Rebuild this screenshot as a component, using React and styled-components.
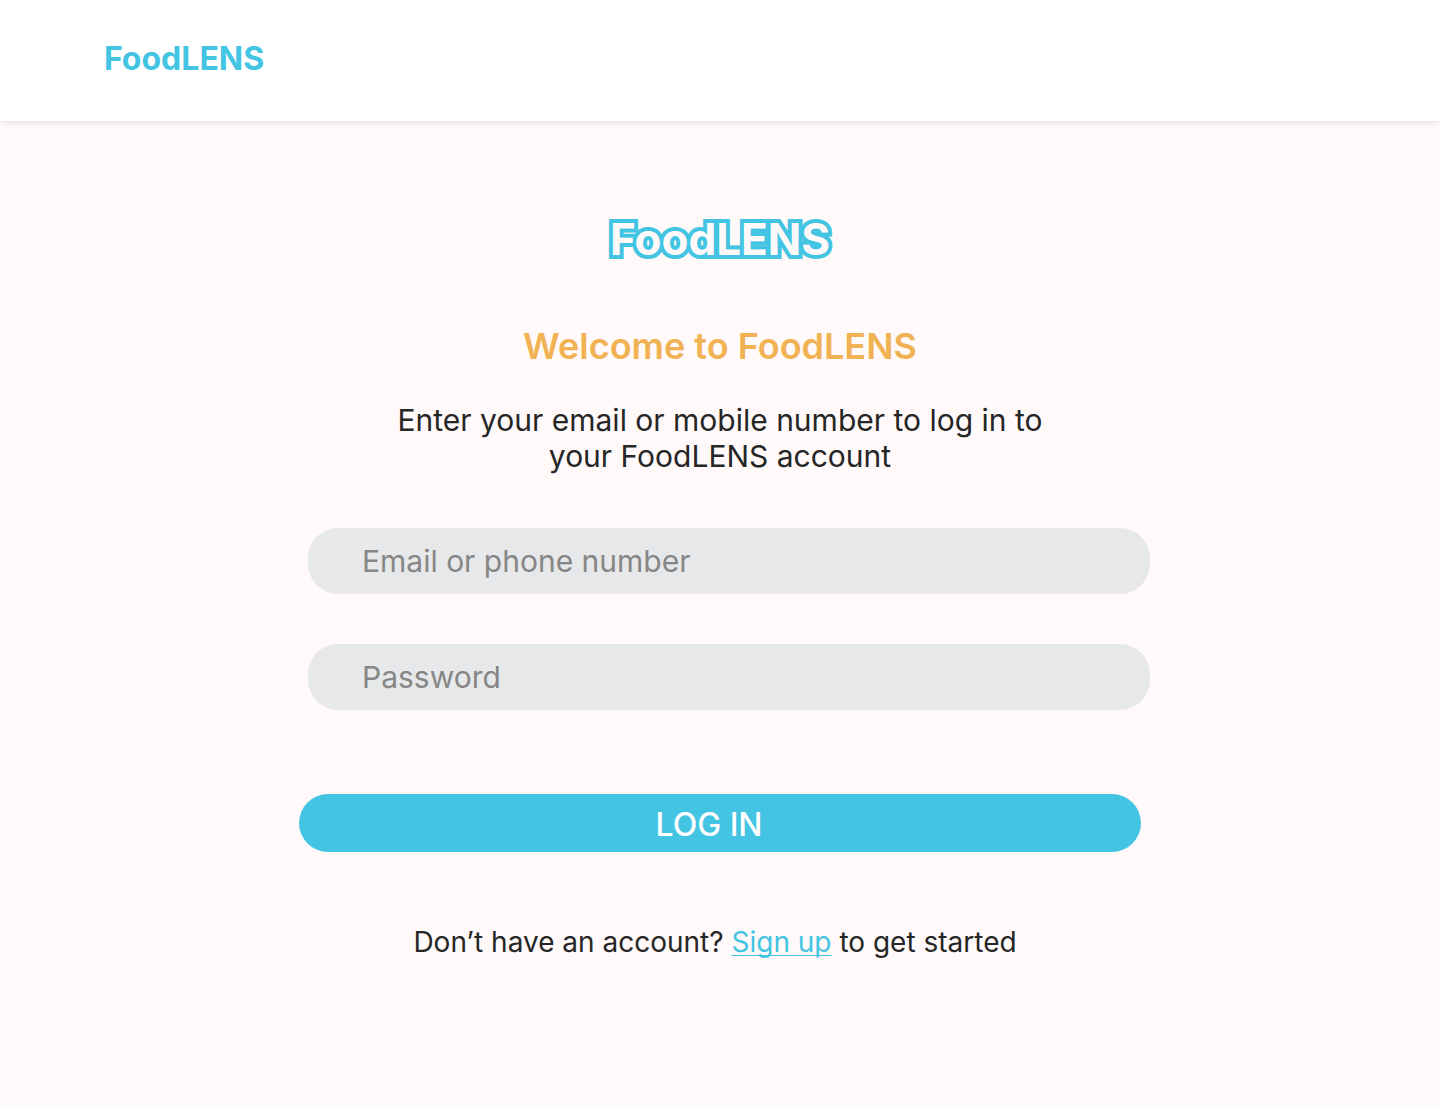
import React from "react";
import styled, { createGlobalStyle } from "styled-components";

const GlobalStyle = createGlobalStyle`
  * { box-sizing: border-box; }
  body {
    margin: 0;
    background: #fff9f9;
    color: #262626;
    font-family: Inter, "Liberation Sans", sans-serif;
  }
`;

const Header = styled.header`
  padding: 39px 104px 42px;
  background: #ffffff;
  box-shadow: 0 1px 8px rgba(0, 0, 0, 0.12);
`;

const Brand = styled.a`
  display: block;
  width: fit-content;
  color: #43c4e3;
  font-size: 32px;
  font-weight: 700;
  line-height: 40px;
  text-decoration: none;
`;

const Main = styled.main`
  display: flex;
  flex-direction: column;
  align-items: center;
  padding: 90px 24px 140px;
  text-align: center;
`;

const Logo = styled.div`
  color: #fff9f9;
  font-size: 44px;
  font-weight: 700;
  line-height: 56px;
  -webkit-text-stroke: 8px #43c4e3;
  paint-order: stroke fill;
`;

const Title = styled.h1`
  margin: 57px 0 0;
  color: #f1b253;
  font-size: 36px;
  font-weight: 600;
  line-height: 44px;
`;

const Intro = styled.p`
  max-width: 680px;
  margin: 34px 0 0;
  font-size: 30px;
  line-height: 36px;
`;

const Form = styled.form`
  display: flex;
  flex-direction: column;
  width: 100%;
  max-width: 842px;
  margin-top: 54px;
`;

const Fields = styled.div`
  display: grid;
  gap: 50px;
  margin: 0 -9px 0 9px;
`;

const Field = styled.input`
  width: 100%;
  height: 66px;
  padding: 0 54px;
  border: 0;
  border-radius: 30px;
  background: #e7e8e9;
  color: #262626;
  font: 400 30px/36px Inter, "Liberation Sans", sans-serif;

  &::placeholder { color: #868686; opacity: 1; }
`;

const Submit = styled.button`
  height: 58px;
  margin-top: 84px;
  padding: 4px 22px 0 0;
  border: 0;
  border-radius: 29px;
  background: #43c4e3;
  color: #ffffff;
  font: 500 32px/40px Inter, "Liberation Sans", sans-serif;
  cursor: pointer;
`;

const Signup = styled.p`
  margin: 73px 10px 0 0;
  font-size: 28px;
  line-height: 34px;
`;

const SignupLink = styled.a`
  color: #43c4e3;
  text-decoration: underline;
  text-decoration-thickness: 1px;
  text-underline-offset: 3px;
  text-decoration-skip-ink: none;
`;

export default function App() {
  return (
    <>
      <GlobalStyle />
      <Header>
        <Brand href="#">FoodLENS</Brand>
      </Header>
      <Main>
        <Logo>FoodLENS</Logo>
        <Title>Welcome to FoodLENS</Title>
        <Intro>Enter your email or mobile number to log in to your FoodLENS account</Intro>
        <Form onSubmit={(event) => event.preventDefault()}>
          <Fields>
            <Field type="text" name="login" aria-label="Email or phone number" placeholder="Email or phone number" />
            <Field type="password" name="password" aria-label="Password" placeholder="Password" />
          </Fields>
          <Submit type="submit">LOG IN</Submit>
        </Form>
        <Signup>
          Don’t have an account? <SignupLink href="#signup">Sign up</SignupLink> to get started
        </Signup>
      </Main>
    </>
  );
}
